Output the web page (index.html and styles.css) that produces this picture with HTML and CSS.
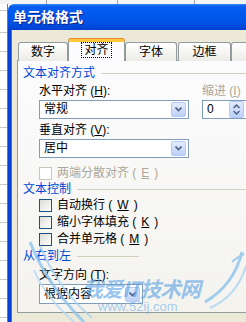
FILE: index.html
```html
<!DOCTYPE html>
<html lang="zh-CN">
<head>
    <meta charset="UTF-8">
    <title>单元格格式</title>
    <link rel="stylesheet" href="styles.css">
</head>
<body>

    <div class="sheet-top"></div>
    <div class="desk">
        <div class="sheet-left"></div>

        <div class="dialog">
            <div class="titlebar">单元格格式</div>
            <div class="dialog-body">
                <div class="tabs">
                    <div class="tab tab-num">数字</div>
                    <div class="tab active"><span class="focus">对齐</span></div>
                    <div class="tab tab-font">字体</div>
                    <div class="tab tab-border">边框</div>
                    <div class="tab"></div>
                </div>

                <div class="panel">
                    <!-- 文本对齐方式 -->
                    <div class="group g-first"><span>文本对齐方式</span><i class="rule"></i></div>
                    <div class="pair labels">
                        <div class="col-left">水平对齐 (<u>H</u>):</div>
                        <div class="col-right disabled">缩进 (<u>I</u>)</div>
                    </div>
                    <div class="pair fields">
                        <div class="col-left">
                            <div class="combo">
                                <span class="combo-text">常规</span>
                                <span class="drop">
                                    <svg width="7" height="5" viewBox="0 0 7 5"><polyline points="0.5,0.5 3.5,3.5 6.5,0.5" fill="none" stroke="#4d6185" stroke-width="1.6"/></svg>
                                </span>
                            </div>
                        </div>
                        <div class="col-right">
                            <div class="spin">
                                <span class="combo-text">0</span>
                                <span class="spin-btn">
                                    <svg width="7" height="11" viewBox="0 0 7 11"><polyline points="0.5,4 3.5,1 6.5,4" fill="none" stroke="#4d6185" stroke-width="1.5"/><polyline points="0.5,7 3.5,10 6.5,7" fill="none" stroke="#4d6185" stroke-width="1.5"/></svg>
                                </span>
                            </div>
                        </div>
                    </div>
                    <div class="field-label l-vert">垂直对齐 (<u>V</u>):</div>
                    <div class="indent">
                        <div class="combo c-vert">
                            <span class="combo-text">居中</span>
                            <span class="drop">
                                <svg width="7" height="5" viewBox="0 0 7 5"><polyline points="0.5,0.5 3.5,3.5 6.5,0.5" fill="none" stroke="#4d6185" stroke-width="1.6"/></svg>
                            </span>
                        </div>
                    </div>
                    <div class="check-row disabled c-dist"><span class="box"></span>两端分散对齐 (<u>E</u>)</div>

                    <!-- 文本控制 -->
                    <div class="group g-ctrl"><span>文本控制</span><i class="rule"></i></div>
                    <div class="check-row c-wrap"><span class="box"></span>自动换行 (<u>W</u>)</div>
                    <div class="check-row c-next"><span class="box"></span>缩小字体填充 (<u>K</u>)</div>
                    <div class="check-row c-next"><span class="box"></span>合并单元格 (<u>M</u>)</div>

                    <!-- 从右到左 -->
                    <div class="group g-rtl"><span>从右到左</span><i class="rule short"></i></div>
                    <div class="field-label l-dir">文字方向 (<u>T</u>):</div>
                    <div class="indent">
                        <div class="combo c-dir">
                            <span class="combo-text">根据内容</span>
                            <span class="drop">
                                <svg width="7" height="5" viewBox="0 0 7 5"><polyline points="0.5,0.5 3.5,3.5 6.5,0.5" fill="none" stroke="#4d6185" stroke-width="1.6"/></svg>
                            </span>
                        </div>
                    </div>
                </div>
            </div>
        </div>
    </div>

    <!-- site watermark over the screenshot -->
    <div class="watermark">
        <svg class="wings" width="246" height="322" viewBox="0 0 246 322">
            <path d="M30 242 C 38 262, 52 290, 84 322" fill="none" stroke="#8cc4ee" stroke-width="3"/>
            <path d="M40 246 C 50 268, 62 292, 92 318" fill="none" stroke="#a8d4f4" stroke-width="2"/>
            <path d="M34 270 C 42 290, 56 306, 74 322" fill="none" stroke="#b4daf6" stroke-width="2"/>
            <path d="M205 302 C 222 292, 236 276, 242 252" fill="none" stroke="#8cc4ee" stroke-width="3"/>
            <path d="M210 308 C 228 300, 240 286, 246 266" fill="none" stroke="#a8d4f4" stroke-width="2"/>
            <path d="M232 262 C 236 258, 240 256, 244 254" fill="none" stroke="#8cc4ee" stroke-width="2"/>
        </svg>
        <div class="wm-logo">我爱IT技术网</div>
        <div class="wm-url">www.52ij.com</div>
    </div>

</body>
</html>
```

FILE: styles.css
```css
* {
    box-sizing: border-box;
}
body {
    margin: 0;
    width: 246px;
    height: 322px;
    overflow: hidden;
    position: relative;
    background: #fff;
    font-family: "Liberation Sans", "Noto Sans CJK SC", sans-serif;
    font-size: 12px;
    color: #000;
}
u {
    text-decoration: underline;
    text-underline-offset: 1px;
}

/* spreadsheet behind the dialog */
.sheet-top {
    height: 4px;
    background:
        linear-gradient(to right, transparent 46px, #a0a0a0 46px 47px, transparent 47px 117px, #a0a0a0 117px 118px, transparent 118px 194px, #a0a0a0 194px 195px, transparent 195px),
        #f4f4f4;
}
.desk {
    display: flex;
}
.sheet-left {
    width: 8px;
    flex-shrink: 0;
    background: repeating-linear-gradient(to bottom, #fff 0 18px, #c8c8c8 18px 19px);
    background-position: 0 10px;
    border-right: 1px solid #7a7a7a;
}

/* dialog window */
.dialog {
    width: 280px;
    flex-shrink: 0;
}
.titlebar {
    height: 26px;
    padding-left: 5px;
    line-height: 27px;
    color: #fff;
    font-size: 14px;
    font-weight: bold;
    text-shadow: 1px 1px 0 #0f1f89;
    border-top-left-radius: 6px;
    background: linear-gradient(to bottom, #3d8cf7 0, #0a5ff0 2px, #0058ee 9px, #0053e6 18px, #0040d0 100%);
}
.dialog-body {
    height: 300px;
    padding: 9px 0 0 6px;
    background: #ece9d8;
    border-left: 3px solid #0a3fd6;
    box-shadow: inset 1px 0 0 #3b6ff0;
}

/* tabs */
.tabs {
    display: flex;
    align-items: flex-end;
    height: 22px;
    margin-bottom: -1px;
    padding-left: 1px;
    position: relative;
    z-index: 1;
}
.tab {
    width: 52px;
    height: 19px;
    line-height: 18px;
    text-align: center;
    border: 1px solid #919b9c;
    border-bottom: none;
    border-radius: 3px 3px 0 0;
    background: linear-gradient(to bottom, #fff, #ecebe6);
}
.tab-num {
    width: 50px;
}
.tab-font {
    width: 52px;
}
.tab-border {
    width: 53px;
    margin-left: 1px;
}
.tab.active {
    width: 57px;
    height: 22px;
    line-height: 17px;
    border-top: 3px solid #ffc83c;
    box-shadow: 0 -1px 0 #e68b2c;
    background: #fcfcfe;
}
.focus {
    outline: 1px dotted #000;
    padding: 0 2px;
}

/* tab page */
.panel {
    height: 253px;
    padding-left: 5px;
    border: 1px solid #919b9c;
    background: linear-gradient(to bottom, #fcfcfe, #f4f3ee);
}
.group {
    display: flex;
    align-items: center;
    height: 14px;
    line-height: 14px;
    color: #0046d5;
}
.group .rule {
    flex: 1;
    border-top: 1px solid #d0d0bf;
    margin-left: 6px;
}
.group .rule.short {
    flex: none;
    width: 62px;
}
.g-first {
    margin-top: 5px;
}
.g-ctrl {
    margin-top: 2px;
}
.g-rtl {
    margin-top: 3px;
}

.pair {
    display: flex;
    margin-left: 16px;
}
.col-left {
    width: 150px;
}
.col-right {
    margin-left: 13px;
}
.labels {
    margin-top: 4px;
    height: 14px;
    line-height: 14px;
}
.fields {
    margin-top: 2px;
}
.field-label {
    margin-left: 16px;
    height: 14px;
    line-height: 14px;
}
.l-vert {
    margin-top: 4px;
}
.l-dir {
    margin-top: 5px;
}
.indent {
    margin-left: 16px;
}
.disabled {
    color: #aca899;
}

/* combo boxes */
.combo,
.spin {
    display: flex;
    align-items: center;
    height: 19px;
    background: #fff;
    border: 1px solid #7f9db9;
}
.combo {
    width: 150px;
}
.c-vert {
    margin-top: 2px;
}
.c-dir {
    width: 104px;
    height: 20px;
    margin-top: 2px;
}
.combo-text {
    flex: 1;
    padding-left: 4px;
    line-height: 15px;
}
.drop,
.spin-btn {
    display: flex;
    align-items: center;
    justify-content: center;
    width: 15px;
    height: 15px;
    margin-right: 2px;
    border: 1px solid #b6c8f3;
    border-radius: 2px;
    background: linear-gradient(to bottom, #e3ecfd, #bcd0f8);
}
.spin {
    width: 46px;
}
.spin-btn {
    height: 17px;
    margin-right: 3px;
}

/* check boxes */
.check-row {
    display: flex;
    align-items: center;
    gap: 5px;
    height: 14px;
    line-height: 14px;
    margin-left: 16px;
}
.box {
    width: 13px;
    height: 13px;
    border: 1px solid #1c5180;
    background: linear-gradient(135deg, #dcdcd7, #fff);
}
.check-row.disabled .box {
    border-color: #cac8bb;
    background: #fff;
}
.c-dist {
    margin-top: 8px;
}
.c-wrap {
    margin-top: 2px;
}
.c-next {
    margin-top: 3px;
}

/* watermark */
.watermark {
    position: absolute;
    left: 0;
    top: 0;
    width: 246px;
    height: 322px;
    pointer-events: none;
}
.wings {
    position: absolute;
    left: 0;
    top: 0;
    opacity: 0.8;
}
.wm-logo {
    position: absolute;
    left: 82px;
    top: 273px;
    font-family: "Noto Sans CJK SC", sans-serif;
    font-size: 21px;
    font-weight: bold;
    font-style: italic;
    letter-spacing: -1px;
    color: rgba(84, 160, 228, 0.6);
}
.wm-url {
    position: absolute;
    left: 98px;
    top: 299px;
    font-size: 13px;
    color: rgba(110, 175, 235, 0.6);
}
```
